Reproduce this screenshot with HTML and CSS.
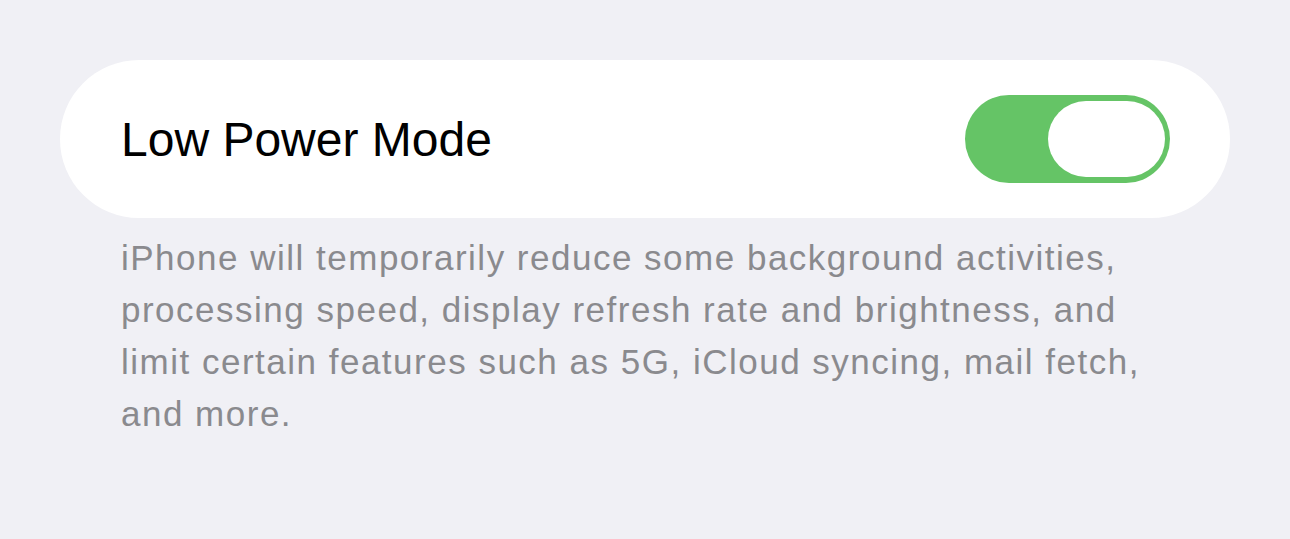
FILE: index.html
```html
<!DOCTYPE html>
<html lang="en">
<head>
    <meta charset="UTF-8">
    <meta name="viewport" content="width=device-width, initial-scale=1.0">
    <title>Battery</title>
    <link rel="stylesheet" href="styles.css">
</head>
<body>
    <div class="settings-group">
        <div class="settings-row">
            <span class="row-label">Low Power Mode</span>
            <div class="switch switch-on">
                <div class="switch-knob"></div>
            </div>
        </div>
    </div>

    <p class="group-footer">
        iPhone will temporarily reduce some background activities,<br>
        processing speed, display refresh rate and brightness, and<br>
        limit certain features such as 5G, iCloud syncing, mail fetch,<br>
        and more.
    </p>
</body>
</html>
```

FILE: styles.css
```css
body {
    font-family: "Liberation Sans", Arial, sans-serif;
    margin: 0;
    padding: 60px 60px 0 60px;
    background-color: #f0f0f5;
}

.settings-group {
    background-color: #fff;
    border-radius: 79px;
}

.settings-row {
    display: flex;
    align-items: center;
    justify-content: space-between;
    height: 158px;
    padding: 0 60px 0 61px;
}

.row-label {
    font-size: 48px;
    color: #000;
}

.switch {
    display: flex;
    justify-content: flex-end;
    align-items: center;
    box-sizing: border-box;
    width: 205px;
    height: 88px;
    padding: 0 5px;
    border-radius: 44px;
    background-color: #e9e9ea;
}

.switch-on {
    background-color: #65c466;
}

.switch-knob {
    width: 117px;
    height: 76px;
    border-radius: 38px;
    background-color: #fff;
}

.group-footer {
    margin: 14px 0 0 0;
    padding-left: 61px;
    font-size: 35px;
    line-height: 52px;
    letter-spacing: 1.5px;
    color: #8a8a8e;
}
```
